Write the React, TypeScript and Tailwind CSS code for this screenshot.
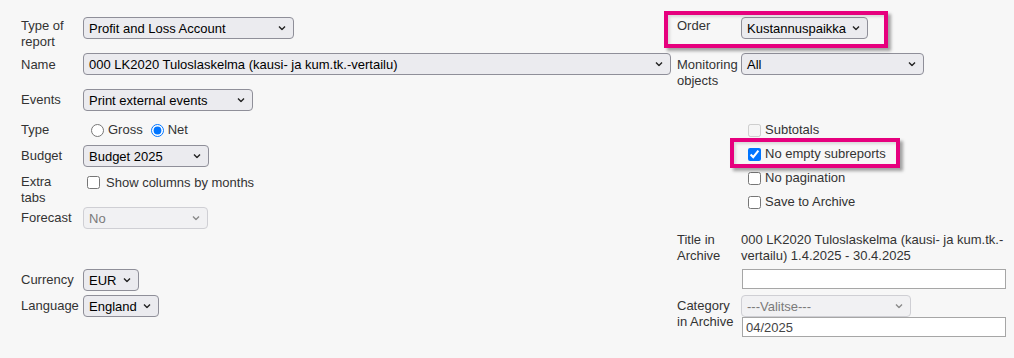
import React from "react";

function Chevron({ disabled }: { disabled?: boolean }) {
  return (
    <svg
      width="8"
      height="5"
      viewBox="0 0 8 5"
      className="absolute right-[7px] top-1/2 -translate-y-1/2"
    >
      <path
        d="M1 1 L4 4 L7 1"
        fill="none"
        stroke={disabled ? "#8a8a8a" : "#222"}
        strokeWidth="1.4"
      />
    </svg>
  );
}

function Sel({
  text,
  w,
  disabled,
}: {
  text: string;
  w: string;
  disabled?: boolean;
}) {
  return (
    <div
      className={`relative flex h-[22px] shrink-0 items-center rounded-[4px] border pl-[5px] text-[13px] leading-none ${w} ${
        disabled
          ? "border-[#cfcfd4] bg-[#f1f1f3] text-[#7a7a7a]"
          : "border-[#8f8f99] bg-[#ebebef] text-black"
      }`}
    >
      <span className="whitespace-nowrap">{text}</span>
      <Chevron disabled={disabled} />
    </div>
  );
}

function Label({ children, mt }: { children: React.ReactNode; mt: string }) {
  return (
    <div className={`w-[62px] shrink-0 whitespace-nowrap leading-4 ${mt}`}>
      {children}
    </div>
  );
}

function RLabel({ children, mt }: { children: React.ReactNode; mt: string }) {
  return (
    <div className={`w-[64px] shrink-0 whitespace-nowrap leading-4 ${mt}`}>
      {children}
    </div>
  );
}

function Check({
  label,
  checked,
  disabled,
}: {
  label: string;
  checked?: boolean;
  disabled?: boolean;
}) {
  return (
    <div className="flex h-[24px] items-center pl-[7px]">
      <input
        type="checkbox"
        defaultChecked={checked}
        disabled={disabled}
        className="m-0 h-[13px] w-[13px]"
      />
      <span className="ml-[4px] whitespace-nowrap">{label}</span>
    </div>
  );
}

export default function App() {
  return (
    <div
      className="h-[358px] w-full bg-[#f7f7f7] text-[13px] text-[#333]"
      style={{ fontFamily: '"Liberation Sans", Arial, sans-serif' }}
    >
      <div className="flex pt-[17px] pl-[21px]">
        {/* Left column */}
        <div className="flex w-[650px] shrink-0 flex-col">
          <div className="flex h-[36px] items-start">
            <Label mt="mt-[1px]">
              Type of
              <br />
              report
            </Label>
            <Sel text="Profit and Loss Account" w="w-[211px]" />
          </div>
          <div className="flex h-[36px] items-start">
            <Label mt="mt-[4px]">Name</Label>
            <Sel
              text="000 LK2020 Tuloslaskelma (kausi- ja kum.tk.-vertailu)"
              w="w-[588px]"
            />
          </div>
          <div className="flex h-[28px] items-start">
            <Label mt="mt-[3px]">Events</Label>
            <Sel text="Print external events" w="w-[170px]" />
          </div>
          <div className="flex h-[28px] items-start">
            <Label mt="mt-[5px]">Type</Label>
            <div className="mt-[1px] flex h-[24px] items-center pl-[8px]">
              <input
                type="radio"
                name="type"
                className="m-0 h-[13px] w-[13px]"
              />
              <span className="ml-[4px]">Gross</span>
              <input
                type="radio"
                name="type"
                defaultChecked
                className="m-0 ml-[8px] h-[13px] w-[13px]"
              />
              <span className="ml-[4px]">Net</span>
            </div>
          </div>
          <div className="flex h-[26px] items-start">
            <Label mt="mt-[3px]">Budget</Label>
            <Sel text="Budget 2025" w="w-[126px]" />
          </div>
          <div className="flex h-[36px] items-start">
            <Label mt="mt-[3px]">
              Extra
              <br />
              tabs
            </Label>
            <div className="mt-[2px] flex items-center pl-[4px]">
              <input type="checkbox" className="m-0 h-[13px] w-[13px]" />
              <span className="ml-[6px] whitespace-nowrap">
                Show columns by months
              </span>
            </div>
          </div>
          <div className="flex h-[62px] items-start">
            <Label mt="mt-[3px]">Forecast</Label>
            <Sel text="No" w="w-[125px]" disabled />
          </div>
          <div className="flex h-[26px] items-start">
            <Label mt="mt-[3px]">Currency</Label>
            <Sel text="EUR" w="w-[56px]" />
          </div>
          <div className="flex h-[26px] items-start">
            <Label mt="mt-[3px]">Language</Label>
            <Sel text="England" w="w-[76px]" />
          </div>
        </div>

        {/* Right column */}
        <div className="relative ml-[6px] flex w-[330px] flex-col">
          <div className="flex h-[36px] items-start">
            <RLabel mt="mt-[1px]">Order</RLabel>
            <Sel text="Kustannuspaikka" w="w-[127px]" />
          </div>
          <div className="flex h-[65px] items-start">
            <RLabel mt="mt-[4px]">
              Monitoring
              <br />
              objects
            </RLabel>
            <Sel text="All" w="w-[183px]" />
          </div>
          <div className="flex">
            <div className="w-[64px] shrink-0" />
            <div className="flex flex-col">
              <Check label="Subtotals" disabled />
              <Check label="No empty subreports" checked />
              <Check label="No pagination" />
              <Check label="Save to Archive" />
            </div>
          </div>
          <div className="mt-[18px] flex items-start">
            <RLabel mt="mt-0">
              Title in
              <br />
              Archive
            </RLabel>
            <div className="flex flex-col">
              <div className="w-[266px] leading-4">
                000 LK2020 Tuloslaskelma (kausi- ja kum.tk.-
                <br />
                vertailu) 1.4.2025 - 30.4.2025
              </div>
              <input
                type="text"
                className="mt-[5px] ml-[1px] h-[20px] w-[264px] border border-[#a6a6a6] bg-white px-[3px] text-[13px] outline-none"
              />
            </div>
          </div>
          <div className="mt-[6px] flex items-start">
            <RLabel mt="mt-[3px]">
              Category
              <br />
              in Archive
            </RLabel>
            <div className="flex flex-col">
              <Sel text="---Valitse---" w="w-[170px]" disabled />
              <input
                type="text"
                defaultValue="04/2025"
                className="ml-[1px] h-[20px] w-[264px] border border-[#a6a6a6] bg-white px-[3px] text-[13px] text-[#444] outline-none"
              />
            </div>
          </div>

          {/* Annotation highlights */}
          <div className="pointer-events-none absolute left-[-13px] top-[-6px] h-[37px] w-[224px] border-4 border-[#e6007e] shadow-[3px_3px_3px_rgba(0,0,0,0.35),inset_2px_2px_3px_rgba(0,0,0,0.12)]" />
          <div className="pointer-events-none absolute left-[53px] top-[121px] h-[30px] w-[170px] border-4 border-[#e6007e] shadow-[3px_3px_3px_rgba(0,0,0,0.35),inset_2px_2px_3px_rgba(0,0,0,0.12)]" />
        </div>
      </div>
    </div>
  );
}
